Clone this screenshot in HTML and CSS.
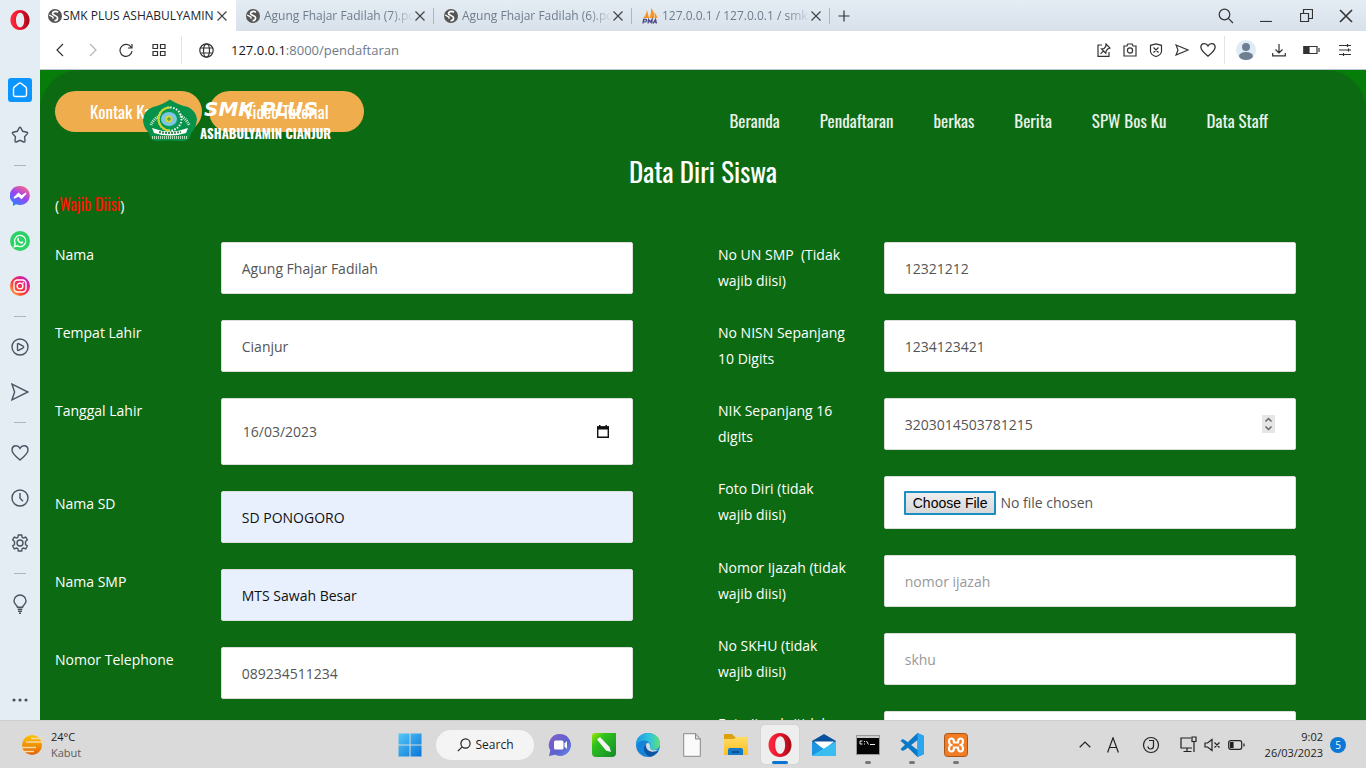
FILE: index.html
```html
<!DOCTYPE html>
<html lang="id">
<head>
<meta charset="utf-8">
<meta name="viewport" content="width=device-width, initial-scale=1">
<title>SMK PLUS ASHABULYAMIN</title>
<link rel="stylesheet" href="styles.css">
</head>
<body>
<svg class="defs" aria-hidden="true">
  <defs>
    <linearGradient id="gOpera" x1="0" x2="1"><stop offset="0" stop-color="#ff2a3d"/><stop offset=".5" stop-color="#e8142b"/><stop offset="1" stop-color="#a30a17"/></linearGradient>
    <linearGradient id="gMsg" x1="0.2" y1="1" x2="0.8" y2="0"><stop offset="0" stop-color="#1d8cff"/><stop offset=".5" stop-color="#9a45f5"/><stop offset="1" stop-color="#ff6680"/></linearGradient>
    <linearGradient id="gIg" x1="0" y1="1" x2="1" y2="0"><stop offset="0" stop-color="#ffc63d"/><stop offset=".4" stop-color="#fb3a3a"/><stop offset=".7" stop-color="#e0208c"/><stop offset="1" stop-color="#9a2be0"/></linearGradient>
    <linearGradient id="gWin" x1="0" y1="0" x2="1" y2="1"><stop offset="0" stop-color="#52c8f8"/><stop offset="1" stop-color="#0a74d8"/></linearGradient>
    <linearGradient id="gSun" x1="0" y1="0" x2="0" y2="1"><stop offset="0" stop-color="#ffc400"/><stop offset="1" stop-color="#e2600a"/></linearGradient>
    <linearGradient id="gChat" x1="0" y1="0" x2="1" y2="1"><stop offset="0" stop-color="#8a5cc8"/><stop offset=".6" stop-color="#5a63cf"/><stop offset="1" stop-color="#6f8be8"/></linearGradient>
    <linearGradient id="gCorel" x1="0" y1="0" x2="1" y2="1"><stop offset="0" stop-color="#a4e800"/><stop offset=".3" stop-color="#2fc21e"/><stop offset="1" stop-color="#128a2a"/></linearGradient>
    <linearGradient id="gEdge" x1="0" y1="0" x2="1" y2="0"><stop offset="0" stop-color="#1c9ae8"/><stop offset=".6" stop-color="#33c6d8"/><stop offset="1" stop-color="#62e070"/></linearGradient>
    <linearGradient id="gFolder" x1="0" y1="0" x2="0" y2="1"><stop offset="0" stop-color="#ffdc62"/><stop offset="1" stop-color="#fbbf22"/></linearGradient>
    <symbol id="globeS" viewBox="0 0 14 14"><circle cx="7" cy="7" r="7" fill="#555"/><path d="M10 3.200C7.500 1.800 4.500 2.600 4.500 4.500 4.500 6.800 9.600 6.200 9.600 9 9.600 10.700 8 11.700 6.500 11.700" fill="none" stroke="#fff" stroke-width="1.700"/><path d="M1.200 6l3.800 2.200v1.600" stroke="#fff" stroke-width="1.400" fill="none"/></symbol>
    <symbol id="cross" viewBox="0 0 12 12"><path d="M1.500 1.500l9 9M10.500 1.500l-9 9" stroke="currentColor" stroke-width="1.200" fill="none"/></symbol>
    <symbol id="opera" viewBox="0 0 24 24"><path fill="url(#gOpera)" fill-rule="evenodd" d="M12 0C5.400 0 0.500 5.300 0.500 12S5.400 24 12 24 23.500 18.700 23.500 12 18.600 0 12 0zm.2 3.200c3 0 4.900 3.700 4.900 8.800s-1.900 8.800-4.900 8.800-5-3.700-5-8.800 2-8.800 5-8.800z"/></symbol>
    <symbol id="heart" viewBox="0 0 18 18"><path d="M9 16C5 12.700 1 9.700 1 6c0-2.400 1.700-4.200 4-4.200 1.700 0 3.200 1 4 2.500.8-1.500 2.300-2.500 4-2.500 2.300 0 4 1.800 4 4.200 0 3.700-4 6.700-8 10z"/></symbol>
    <symbol id="send" viewBox="0 0 18 18"><path d="M1 1.200L17 9 1 16.800 3.600 9z"/></symbol>
  </defs>
</svg>

<div class="desktop">
  <aside class="sidebar">
    <button class="side logo" aria-label="Opera"><svg width="20" height="20"><use href="#opera"/></svg></button>
    <button class="side" aria-label="Speed dial"><span class="home"><svg width="16" height="16" viewBox="0 0 16 16"><path d="M1.500 6.500Q1.500 5.700 2.200 5.100L7 1.300q1-.7 2 0l4.800 3.800q.7.600.7 1.400v6.300q0 1.700-1.700 1.700H3.200q-1.700 0-1.700-1.700z"/></svg></span></button>
    <button class="side" aria-label="Bookmarks"><svg width="18" height="18" viewBox="0 0 18 18"><path d="M8.300 1.600q.7-1 1.400 0l2 3.700 4.200.9q1.200.4.500 1.400l-2.800 3.200.4 4.400q-.1 1.200-1.300.8L9 14.300 5.300 16q-1.200.4-1.300-.8l.4-4.400-2.800-3.200q-.7-1 .5-1.400l4.200-.9z"/></svg></button>
    <hr>
    <button class="side" aria-label="Messenger"><svg class="plain" width="20" height="20" viewBox="0 0 20 20"><path d="M10 0a10 9.500 0 1 1-4 18.300L3 20v-3.500A10 9.500 0 0 1 10 0z" fill="url(#gMsg)"/><path d="M4 12l4.500-4.500 3 2.500L16 7.200l-4.500 5-3-2.400z" fill="#fff" stroke="#fff"/></svg></button>
    <button class="side" aria-label="WhatsApp"><svg class="plain" width="20" height="20" viewBox="0 0 20 20"><circle cx="10" cy="10" r="10" fill="#2bd366"/><path d="M4.300 15.700l.9-3.100a5.600 5.600 0 1 1 2.100 2.200z" fill="none" stroke="#fff" stroke-width="1.300"/><path d="M7.600 7c.8-.7 1.200.1 1.500.9.1.5-.7.7-.4 1.200.6 1 1.200 1.500 2.100 1.900.5.200.8-.9 1.200-.7 1.600.7 1.400 1 .9 1.700C10.800 14 6 9.800 7.600 7z" fill="#fff"/></svg></button>
    <button class="side" aria-label="Instagram"><svg class="plain" width="20" height="20" viewBox="0 0 20 20"><circle cx="10" cy="10" r="10" fill="url(#gIg)"/><g fill="none" stroke="#fff" stroke-width="1.400"><rect x="4" y="4" width="12" height="12" rx="3.500"/><circle cx="10" cy="10" r="2.900"/></g><circle cx="13.400" cy="6.600" r=".9" fill="#fff"/></svg></button>
    <hr>
    <button class="side" aria-label="Player"><svg width="18" height="18" viewBox="0 0 18 18"><circle cx="9" cy="9" r="8"/><path d="M6.500 6.200q0-1 1-.6l4.700 2.600q1 .8 0 1.600l-4.700 2.600q-1 .4-1-.6z"/></svg></button>
    <button class="side" aria-label="My Flow"><svg width="18" height="18"><use href="#send"/></svg></button>
    <hr>
    <button class="side" aria-label="Likes"><svg width="18" height="18"><use href="#heart"/></svg></button>
    <button class="side" aria-label="History"><svg width="18" height="18" viewBox="0 0 18 18"><circle cx="9" cy="9" r="8"/><path d="M9 4v5.200l3 3"/></svg></button>
    <button class="side" aria-label="Settings"><svg width="18" height="18" viewBox="0 0 18 18"><circle cx="9" cy="9" r="3"/><path d="M7.300 1h3.400l.4 2.300 1.300.7 2.300-.8 1.600 2.700-1.800 1.600v2.900l1.800 1.600-1.600 2.800-2.300-.8-1.300.7-.4 2.300H7.300l-.4-2.300-1.300-.7-2.300.8-1.600-2.800 1.800-1.600V7.500L1.700 5.900l1.600-2.700 2.300.8 1.300-.7z"/></svg></button>
    <hr>
    <button class="side" aria-label="Tips"><svg width="18" height="20" viewBox="0 0 18 20"><path d="M6.500 13.200C6.500 11.500 3 10.500 3 7a6 6 0 0 1 12 0c0 3.500-3.500 4.500-3.500 6.200zM6.700 15.200h4.600M7 17.200h4M8 19.200h2"/></svg></button>
    <button class="side more" aria-label="More"><svg class="plain" width="18" height="6" viewBox="0 0 18 6"><circle cx="3" cy="3" r="1.600"/><circle cx="9" cy="3" r="1.600"/><circle cx="15" cy="3" r="1.600"/></svg></button>
  </aside>

  <div class="browser">
    <div class="tabs">
      <div class="tab active"><svg width="14" height="14"><use href="#globeS"/></svg><span class="tab-title">SMK PLUS ASHABULYAMIN</span><button aria-label="Close tab"><svg width="12" height="12"><use href="#cross"/></svg></button></div>
      <div class="tab"><svg width="14" height="14"><use href="#globeS"/></svg><span class="tab-title">Agung Fhajar Fadilah (7).pd</span><button aria-label="Close tab"><svg width="12" height="12"><use href="#cross"/></svg></button></div>
      <div class="tab"><svg width="14" height="14"><use href="#globeS"/></svg><span class="tab-title">Agung Fhajar Fadilah (6).pd</span><button aria-label="Close tab"><svg width="12" height="12"><use href="#cross"/></svg></button></div>
      <div class="tab"><svg width="16" height="16" viewBox="0 0 16 16"><path d="M1 10Q4.500 7 5 2L7 10zM7.500 10Q9.500 5 9 0q3.500 4 3.500 10zM13 10l-.5-6q2 3 3 6z" fill="#f7941d"/><path d="M1 15.500l.6-4h2q1.400.2 1 1.400-.4 1-2.800 1M6 15.500l.7-4 1.500 2.500 2-2.500-.5 4M11 15.500l2.500-4 1 4M12 14.200h2" fill="none" stroke="#4d4b83" stroke-width="1.300"/></svg><span class="tab-title">127.0.0.1 / 127.0.0.1 / smka</span><button aria-label="Close tab"><svg width="12" height="12"><use href="#cross"/></svg></button></div>
      <button class="new-tab" aria-label="New tab"><svg width="12" height="12" viewBox="0 0 12 12"><path d="M6 .5v11M.5 6h11"/></svg></button>
      <div class="window-controls">
        <button aria-label="Search tabs"><svg width="16" height="16" viewBox="0 0 16 16"><circle cx="6.500" cy="6.500" r="5.300"/><path d="M10.300 10.300l4.700 4.700"/></svg></button>
        <button aria-label="Minimize"><svg width="12" height="12" viewBox="0 0 12 12"><path d="M0 11.500h12"/></svg></button>
        <button aria-label="Restore"><svg width="13" height="13" viewBox="0 0 13 13"><path d="M.5 4.500h8v8h-8zM3.500 4V.5h9v9H9"/></svg></button>
        <button class="close" aria-label="Close"><svg width="16" height="16"><use href="#cross"/></svg></button>
      </div>
    </div>

    <div class="toolbar">
      <button class="tool" aria-label="Back"><svg width="14" height="14" viewBox="0 0 14 14"><path d="M10 1L4 7l6 6"/></svg></button>
      <button class="tool off" aria-label="Forward"><svg width="14" height="14" viewBox="0 0 14 14"><path d="M4 1l6 6-6 6"/></svg></button>
      <button class="tool" aria-label="Reload"><svg width="14" height="14" viewBox="0 0 14 14"><path d="M12.300 4.500A6 6 0 1 0 13 8M13 1v4H9"/></svg></button>
      <button class="tool" aria-label="Start page"><svg width="14" height="14" viewBox="0 0 14 14"><path d="M1 1.500h4.500v4H1zM8.500 1.500H13v4H8.500zM1 8.500h4.500v4H1zM8.500 8.500H13v4H8.500z"/></svg></button>
      <span class="divider"></span>
      <button class="tool" aria-label="Site information"><svg width="15" height="15" viewBox="0 0 15 15"><circle cx="7.500" cy="7.500" r="6.700"/><ellipse cx="7.500" cy="7.500" rx="3" ry="6.700"/><path d="M1.500 5h12M1.500 10h12"/></svg></button>
      <span class="url">127.0.0.1<span>:8000/pendaftaran</span></span>
      <button class="tool small" aria-label="Pin"><svg width="14" height="14" viewBox="0 0 14 14"><path d="M5 2H1v11.300h11V9M9 1l4 4-1.800.6-2 2.200-.4 2.400L4.500 6l2.400-.4L8.800 3.500zM6.500 7.800L3.500 10.800"/></svg></button>
      <button class="tool small" aria-label="Snapshot"><svg width="14" height="14" viewBox="0 0 14 14"><path d="M1 3h3l.8-2h4.400L10 3h3v10H1z"/><circle cx="7" cy="7.500" r="2.600"/></svg></button>
      <button class="tool small" aria-label="Ad blocker"><svg width="14" height="14" viewBox="0 0 14 14"><path d="M7 .8l5.500 1.500v6.200Q12 12 7 13.500 2 12 1.500 8.500V2.300zM4.500 4.500l5 5M9.500 4.500l-5 5"/></svg></button>
      <button class="tool small" aria-label="Send to My Flow"><svg width="14" height="12" viewBox="0 0 14 12"><path d="M1 1l12 5-12 5 2-5z"/></svg></button>
      <button class="tool small like" aria-label="Bookmark"><svg width="16" height="16"><use href="#heart"/></svg></button>
      <span class="divider end"></span>
      <button class="tool" aria-label="Profile"><svg class="plain" width="20" height="20" viewBox="0 0 20 20"><circle cx="10" cy="10" r="10" fill="#dfebf5"/><circle cx="10" cy="7" r="4" fill="#6e7f91"/><ellipse cx="10" cy="16" rx="7" ry="4" fill="#6e7f91"/></svg></button>
      <button class="tool" aria-label="Downloads"><svg width="14" height="14" viewBox="0 0 14 14"><path d="M7 1v8.500M3.500 6.500L7 10l3.500-3.500M.7 10v2.800h12.600V10"/></svg></button>
      <button class="tool" aria-label="Battery saver"><svg width="17" height="10" viewBox="0 0 17 10"><path d="M1 1.500h13v7H1z"/><path d="M1 1.500h5v7H1z" fill="#333"/><path d="M16 3v4"/></svg></button>
      <button class="tool" aria-label="Easy setup"><svg width="12" height="12" viewBox="0 0 12 12"><path d="M0 1.500h12M0 6h12M0 10.500h12M8.500 0v3M9.500 4.500v3M4.500 9v3"/></svg></button>
    </div>

    <div class="viewport">
      <main class="page">
        <header class="site-header">
          <a class="brand" href="#">
            <svg width="56" height="43" viewBox="0 0 56 43">
              <path d="M28 .5Q36 6 46 8 54 12 55 20 54 30 49 34 48 41 42 42 28 41 14 42 8 41 7 34 1 28 1 21 2 11 11 8 20 6 28 .5z" fill="#07924a"/>
              <path d="M9 26A20 17 0 0 1 47 26" fill="none" stroke="#cfe9d4" stroke-width="3" stroke-dasharray="1 1"/>
              <circle cx="28" cy="20" r="11.500" fill="none" stroke="#fff" stroke-width="2" stroke-dasharray="1.500 1.500"/>
              <path d="M28 8.500a11.500 11.500 0 0 0 0 23" fill="none" stroke="#c9d52b" stroke-width="2"/>
              <circle cx="28" cy="20" r="10" fill="#0a9a55"/><ellipse cx="27" cy="20" rx="8" ry="7" fill="#7cc7e5"/><circle cx="27" cy="20" r="3.500" fill="#d3d82c"/><path d="M25 20h4M27 18v4" stroke="#38903f"/>
              <path d="M10 29q18 7 36 0l-2 5q-16 5-32 0z" fill="#fff"/><path d="M17 33q11 2 22 0" fill="none" stroke="#3b8050" stroke-width="2" stroke-dasharray="2 1"/>
              <path d="M10 38.500h36" stroke="#b7deb8" stroke-width="3" stroke-dasharray="1 1"/>
            </svg>
            <span class="brand-text"><strong>SMK PLUS</strong><b>ASHABULYAMIN CIANJUR</b></span>
          </a>
          <nav class="menu">
            <a href="#">Beranda</a><a href="#">Pendaftaran</a><a href="#">berkas</a><a href="#">Berita</a><a href="#">SPW Bos Ku</a><a href="#">Data Staff</a>
          </nav>
        </header>
        <div class="actions"><a class="pill" href="#">Kontak Kami</a><a class="pill" href="#">Video Tutorial</a></div>
        <h1>Data Diri Siswa</h1>
        <p class="required">(<span>Wajib Diisi</span>)</p>
        <form class="form">
          <div class="column">
            <div class="field"><label for="nama">Nama</label><input id="nama" type="text" value="Agung Fhajar Fadilah"></div>
            <div class="field"><label for="tempat">Tempat Lahir</label><input id="tempat" type="text" value="Cianjur"></div>
            <div class="field"><label for="tanggal">Tanggal Lahir</label><div class="date"><input id="tanggal" type="text" value="16/03/2023"><button type="button" aria-label="Pilih tanggal"><svg width="12" height="13" viewBox="0 0 12 13"><path d="M.7 2h10.600v10.300H.7z" fill="none" stroke="#111" stroke-width="1.400"/><path d="M0 1.500h12v3H0zM2 0h1.500v2H2zM8.500 0H10v2H8.500z" fill="#111"/></svg></button></div></div>
            <div class="field"><label for="sd">Nama SD</label><input id="sd" class="filled" type="text" value="SD PONOGORO"></div>
            <div class="field"><label for="smp">Nama SMP</label><input id="smp" class="filled" type="text" value="MTS Sawah Besar"></div>
            <div class="field"><label for="telp">Nomor Telephone</label><input id="telp" type="text" value="089234511234"></div>
          </div>
          <div class="column">
            <div class="field"><label for="un">No UN SMP &nbsp;(Tidak wajib diisi)</label><input id="un" type="text" value="12321212"></div>
            <div class="field"><label for="nisn">No NISN Sepanjang 10 Digits</label><input id="nisn" type="text" value="1234123421"></div>
            <div class="field"><label for="nik">NIK Sepanjang 16 digits</label><input id="nik" type="number" value="3203014503781215"></div>
            <div class="field"><label for="foto">Foto Diri (tidak wajib diisi)</label><input id="foto" type="file"></div>
            <div class="field"><label for="ijazah">Nomor Ijazah (tidak wajib diisi)</label><input id="ijazah" type="text" placeholder="nomor ijazah"></div>
            <div class="field"><label for="skhu">No SKHU (tidak wajib diisi)</label><input id="skhu" type="text" placeholder="skhu"></div>
            <div class="field"><label for="fotoijazah">Foto Ijazah (tidak wajib diisi)</label><input id="fotoijazah" type="file"></div>
          </div>
        </form>
      </main>
    </div>
  </div>

  <footer class="taskbar">
    <button class="weather">
      <svg width="26" height="22" viewBox="0 0 26 22"><circle cx="13" cy="11" r="10" fill="url(#gSun)"/><path d="M12 4.500h13M7 8h17M2 13.500h15M2 17.500h13" stroke="#f3d9a3" stroke-width="1.600"/></svg>
      <span><b>24°C</b><small>Kabut</small></span>
    </button>
    <div class="apps">
      <button class="app" aria-label="Start"><svg width="24" height="24" viewBox="0 0 24 24"><path d="M.5.500h11v11H.5zM12.500.500h11v11h-11zM.5 12.500h11v11H.5zM12.500 12.500h11v11h-11z" fill="url(#gWin)"/></svg></button>
      <button class="search"><svg width="14" height="14" viewBox="0 0 14 14"><circle cx="8.500" cy="5.500" r="4.600"/><path d="M5.200 8.800L.8 13.200"/></svg>Search</button>
      <button class="app" aria-label="Chat"><svg width="24" height="24" viewBox="0 0 24 24"><path d="M12 1a11 11 0 1 1-5 20.800L1 23l1.300-5.500A11 11 0 0 1 12 1z" fill="url(#gChat)"/><rect x="6" y="7.500" width="9.500" height="9" rx="1.500" fill="#fff"/><path d="M16.500 10.500L19 8v8l-2.500-2.500z" fill="#fff"/></svg></button>
      <button class="app" aria-label="CorelDRAW"><svg width="24" height="24" viewBox="0 0 24 24"><path d="M0 3q0-3 3-3h21v20q0 4-4 4H4q-4 0-4-4z" fill="url(#gCorel)"/><path d="M5 6.500L8 4l9.500 10 1.500 5-5-1.500z" fill="#f4f4f4"/></svg></button>
      <button class="app" aria-label="Edge"><svg width="24" height="24" viewBox="0 0 24 24"><circle cx="12" cy="12" r="12" fill="#1583d8"/><path d="M0 11.500C0 4.500 5.500 0 12 0c7 0 12 4.500 12 10.500 0 4-3 6.500-6.500 6.500-3 0-4-1.300-3.500-2.500C15.500 11 12.500 7.500 8.500 7.500 4 7.500.7 10 0 13z" fill="url(#gEdge)"/><path d="M9.500 12C6.500 15 8 21.500 14 23.700c4-.7 7-3 8.500-6C17 20 11 18 9.500 12z" fill="#0c55a2"/><path d="M10 12.500Q10 9.800 12.500 9.800 14.600 11.500 14 14q-.7 1.800 2 2.900 3 .8 6.500-.4-5 3.500-9 1.500Q10 16 10 12.500z" fill="#dadada"/></svg></button>
      <button class="app" aria-label="Document"><svg width="18" height="24" viewBox="0 0 18 24"><path d="M.7.700h12L17.300 6v17.300H.7zM12.500.700V6h5" fill="#fafafa" stroke="#888"/></svg></button>
      <button class="app" aria-label="File Explorer"><svg width="24" height="24" viewBox="0 0 24 24"><path d="M0 2q0-1 1-1h7l3 3h12q1 0 1 1v4H0z" fill="#dfa010"/><path d="M0 6h10l2-2h11q1 0 1 1v17H0z" fill="url(#gFolder)"/><path d="M4 22v-5q0-2 2-2h11q2 0 2 2v5z" fill="#1678c8"/><path d="M8 19h7" stroke="#07538f" stroke-width="2"/></svg></button>
      <button class="app current" aria-label="Opera"><svg width="24" height="24"><use href="#opera"/></svg></button>
      <button class="app" aria-label="Mail"><svg width="24" height="24" viewBox="0 0 24 24"><path d="M0 8L12 1l12 7v5H0z" fill="#0a4f9c"/><path d="M2 8.500h20L12 17z" fill="#fff"/><path d="M0 8l12 8L0 23z" fill="#1b96e0"/><path d="M24 8v15H0z" fill="#38bdf0"/></svg></button>
      <button class="app running" aria-label="Command Prompt"><svg width="24" height="20" viewBox="0 0 24 20"><path d="M.5.500h23v19H.5z" fill="#050505" stroke="#999"/><path d="M1 1h22v2H1z" fill="#ccc"/><path d="M6.500 6H4v3h2.500M8.500 6v1M8.500 8.500v1M10.500 6l2 3.500M14 9.500h5" fill="none" stroke="#eee"/></svg></button>
      <button class="app running" aria-label="Visual Studio Code"><svg width="24" height="24" viewBox="0 0 24 24"><path d="M17.500 0L24 3v18l-6.500 3-15-14.500L.5 8 2.500 6l3 1.500 12 9.500V7l-12 9.500-3 1.500-2-2z" fill="#0879c9"/><path d="M17.500 0L24 3v18l-6.500 3z" fill="#2aa5ee"/></svg></button>
      <button class="app running" aria-label="XAMPP"><svg width="24" height="24" viewBox="0 0 24 24"><rect x=".5" y=".5" width="23" height="23" rx="3" fill="#f17c23" stroke="#a95516"/><path d="M10 9.500Q10 5.500 7.500 5.500 5 5.500 5 8.500 5 11 7 12 5 13 5 15.500 5 18.500 7.500 18.500 10 18.500 10 14.500H14Q14 18.500 16.500 18.500 19 18.500 19 15.500 19 13 17 12 19 11 19 8.500 19 5.500 16.500 5.500 14 5.500 14 9.500Z" fill="none" stroke="#fff" stroke-width="2.200"/></svg></button>
    </div>
    <div class="tray">
      <button aria-label="Hidden icons"><svg width="12" height="7" viewBox="0 0 12 7"><path d="M.7 6.200L6 1l5.300 5.200"/></svg></button>
      <button class="letter" aria-label="Input"><svg width="12" height="16" viewBox="0 0 12 16"><path d="M.6 15.500L6 .8l5.400 14.700M2.500 10.500h7"/></svg></button>
      <button class="ime" aria-label="IME"><svg width="18" height="18" viewBox="0 0 18 18"><circle cx="9" cy="9" r="7.500"/><path d="M7 4.500h4.500V10q0 3-3 3-2.500 0-2.500-2.500"/></svg></button>
      <button class="status" aria-label="Network, sound and battery"><svg width="17" height="17" viewBox="0 0 17 17"><path d="M11 2H1v10h11M7 12v3M3.500 15.500h8M12 1h4v4.500h-4zM14 5.500V16"/></svg><svg width="17" height="14" viewBox="0 0 17 14"><path d="M1 5h2.500L8 1.500v11L3.500 9H1zM10.500 4.500l5 5M15.500 4.500l-5 5"/></svg><svg width="17" height="10" viewBox="0 0 17 10"><rect x=".7" y=".7" width="13" height="8.600" rx="2"/><path d="M16 3.500v3"/><path d="M2.500 2.500H5v5H2.500z" fill="#222"/></svg></button>
      <time class="clock"><span>9:02</span><span>26/03/2023</span></time>
      <span class="badge">5</span>
    </div>
  </footer>
</div>
</body>
</html>
```

FILE: styles.css
```css
* { box-sizing: border-box; }
body { margin: 0; font-family: "Open Sans", "Noto Sans", sans-serif; font-size: 14px; }
button { border: 0; padding: 0; background: none; font: inherit; color: inherit; }
a { color: inherit; text-decoration: none; }
svg { display: block; flex: none; }
.defs { position: absolute; width: 0; height: 0; }

.desktop {
  display: grid;
  grid-template: minmax(0, 1fr) 48px / 40px minmax(0, 1fr);
  height: 100vh;
  overflow: hidden;
}

/* Sidebar */
.sidebar { display: flex; flex-direction: column; background: #e4ecf4; }
.side { display: grid; place-items: center; height: 45px; flex: none; }
.side svg { fill: none; stroke: #4a5360; stroke-width: 1.4px; }
.side .plain { fill: #4a5360; stroke: none; }
.side.logo { height: 40px; margin-bottom: 27px; }
.side.logo svg { stroke: none; }
.side.more { height: 40px; margin-top: auto; }
.home { display: grid; place-items: center; width: 24px; height: 24px; border-radius: 3px; background: #0a95ff; }
.side .home svg { stroke: #fff; }
.sidebar hr { width: 12px; height: 1px; margin: 8px auto 7px; border: 0; background: #a9b7c6; flex: none; }

/* Browser chrome */
.browser { display: flex; flex-direction: column; min-width: 0; min-height: 0; }
.tabs { display: flex; align-items: stretch; height: 31px; flex: none; background: linear-gradient(#e4ecf4, #d8e0ea); font-size: 12px; color: #6e7d8c; }
.tab { display: flex; align-items: center; flex: 0 1 198px; min-width: 0; padding: 0 8px 0 10px; }
.tab.active { flex-basis: 196px; padding-left: 8px; background: #fff; color: #20242a; }
.tab:not(.active) { background: linear-gradient(#a8b8c8, #a8b8c8) right center / 1px 16px no-repeat; }
.tab-title { flex: 1; overflow: hidden; white-space: nowrap; padding-left: 4px; -webkit-mask-image: linear-gradient(90deg, #000 85%, transparent); mask-image: linear-gradient(90deg, #000 85%, transparent); }
.tab.active .tab-title { padding-left: 1px; -webkit-mask-image: none; mask-image: none; }
.tab button { color: #444; }
.new-tab { display: grid; place-items: center; width: 28px; }
.new-tab svg, .window-controls svg { fill: none; stroke: #333; stroke-width: 1.2px; }
.window-controls { display: flex; margin-left: auto; color: #333; }
.window-controls button { display: grid; place-items: center; width: 40px; }

.toolbar { display: flex; align-items: center; height: 39px; flex: none; padding: 0 5px 0 3px; background: #fff; border-bottom: 1px solid #b9c4cd; }
.tool { display: grid; place-items: center; width: 33px; height: 38px; }
.tool.small { width: 26px; }
.tool svg { fill: none; stroke: #333; stroke-width: 1.2px; }
.tool.like svg { stroke-width: 1.5px; }
.tool .plain { stroke: none; }
.tool.off svg { stroke: #b5b5b5; }
.divider { width: 1px; height: 28px; margin: 0 8px 0 6px; background: #e0e3e7; }
.divider.end { margin: 0 4px 0 3px; }
.url { flex: 1; margin-left: 8px; font-size: 13px; color: #15191d; }
.url span { color: #6d7b89; }

/* Page */
.viewport { flex: 1; min-height: 0; overflow: hidden; background: #067d08; }
.page { position: relative; min-height: 100%; padding: 21px 0 0; border-radius: 40px 40px 0 0; background: #0c6b12; color: #fff; }
.site-header { position: absolute; top: 29px; left: 0; right: 0; display: flex; justify-content: space-between; align-items: center; padding: 0 98px 0 102px; }
.brand { display: flex; align-items: center; gap: 2px; }
.brand-text { display: flex; flex-direction: column; gap: 4px; white-space: nowrap; }
.brand-text strong { padding-left: 4px; font: italic 700 20px/21px "DejaVu Sans", sans-serif; }
.brand-text b { font: 700 13px/18px "Oswald", "Liberation Sans Narrow", sans-serif; }
.menu { display: flex; gap: 40px; font: 17px/24px "Oswald", "Liberation Sans Narrow", sans-serif; color: #e9f2e9; }
.actions { display: flex; gap: 7px; padding: 0 15px; }
.pill { padding: 0 35px; border-radius: 21px; background: #f0ad4e; font: 17px/41px "Oswald", "Liberation Sans Narrow", sans-serif; white-space: nowrap; }
.page h1 { margin: 23px 0 0; text-align: center; font: 400 27px/32px "Oswald", "Liberation Sans Narrow", sans-serif; }
.required { height: 26px; margin: 5px 15px 0; line-height: 26px; }
.required span { color: #f10; font: 16px/24px "Oswald", "Liberation Sans Narrow", sans-serif; }
.form { display: grid; grid-template-columns: 1fr 1fr; margin-top: 24px; }
.column { display: flex; flex-direction: column; gap: 26px; min-width: 0; }
.field { display: grid; grid-template-columns: 3fr 8fr 1fr; align-items: start; }
.field label { padding: 0 20px 0 15px; font-weight: 500; line-height: 26px; }
.field > input, .date { min-width: 0; margin: 0 15px; }
.field input { height: 52px; padding: 0 20px; border: 1px solid #ddd; border-radius: 2px; background: #fff; color: #555; font: 14px/26px "Open Sans", "Noto Sans", sans-serif; }
.field input::placeholder { color: #999; }
.field input.filled { background: #e8f0fe; color: #111; }
.date { display: flex; height: 67px; padding: 0 23px 0 1px; border: 1px solid #ddd; border-radius: 2px; background: #fff; align-items: center; }
.date input { flex: 1; min-width: 0; border: 0; }
.field input[type="number"]::-webkit-inner-spin-button {
  -webkit-appearance: none;
  width: 13px;
  height: 18px;
  opacity: 1;
  background: #e6e6e6 url("data:image/svg+xml,%3Csvg xmlns='http://www.w3.org/2000/svg' width='13' height='18'%3E%3Cpath d='M3.500 6.500l3-3 3 3M3.500 11.500l3 3 3-3' fill='none' stroke='%23666' stroke-width='1.500'/%3E%3C/svg%3E") center no-repeat;
}
.field input[type="file"] { height: 53px; padding: 13px 19px; }
.field input[type="file"]::file-selector-button { margin: 0 4px 0 0; padding: 1px 7px; border: 2px solid #1b8fc4; border-radius: 1px; background: linear-gradient(#eee, #d8d8d8); color: #000; font: 14px/18px "Liberation Sans", sans-serif; }

/* Taskbar */
.taskbar { grid-column: 1 / -1; display: grid; grid-template-columns: 1fr auto 1fr; align-items: center; background: #dadada; border-top: 1px solid #cfcfcf; font-size: 12px; color: #1c1c1c; }
.weather { display: flex; gap: 6px; align-items: center; justify-self: start; padding-left: 19px; text-align: left; }
.weather b, .weather small { display: block; font-weight: 400; font-size: 11px; line-height: 16px; }
.weather small { color: #5c5c5c; }
.apps { display: flex; align-items: center; }
.app { position: relative; display: grid; place-items: center; width: 44px; height: 47px; }
.search { display: flex; align-items: center; justify-content: center; gap: 5px; width: 98px; height: 30px; margin: 0 4px; border-radius: 15px; background: #f4f4f4; }
.search svg, .tray svg { fill: none; stroke: #222; stroke-width: 1.2px; }
.current::before { content: ""; position: absolute; inset: 4px 3px; border-radius: 4px; background: #eee; box-shadow: 0 0 1px #aaa; }
.current svg { position: relative; }
.current::after, .running::after { content: ""; position: absolute; bottom: 4px; left: 19px; width: 6px; height: 3px; border-radius: 2px; background: #777; }
.current::after { left: 14px; width: 16px; background: #0a74d0; }
.tray { display: flex; align-items: center; justify-content: flex-end; padding-right: 20px; }
.letter { margin-left: 16px; }
.ime { margin-left: 23px; }
.status { display: flex; align-items: center; gap: 7px; margin: 0 16px 0 20px; }
.clock { display: flex; flex-direction: column; align-items: flex-end; font-size: 11px; line-height: 16px; min-width: 62px; }
.badge { display: grid; place-items: center; width: 16px; height: 16px; margin-left: 7px; border-radius: 50%; background: #0a78d4; color: #fff; font-size: 10px; }
```
